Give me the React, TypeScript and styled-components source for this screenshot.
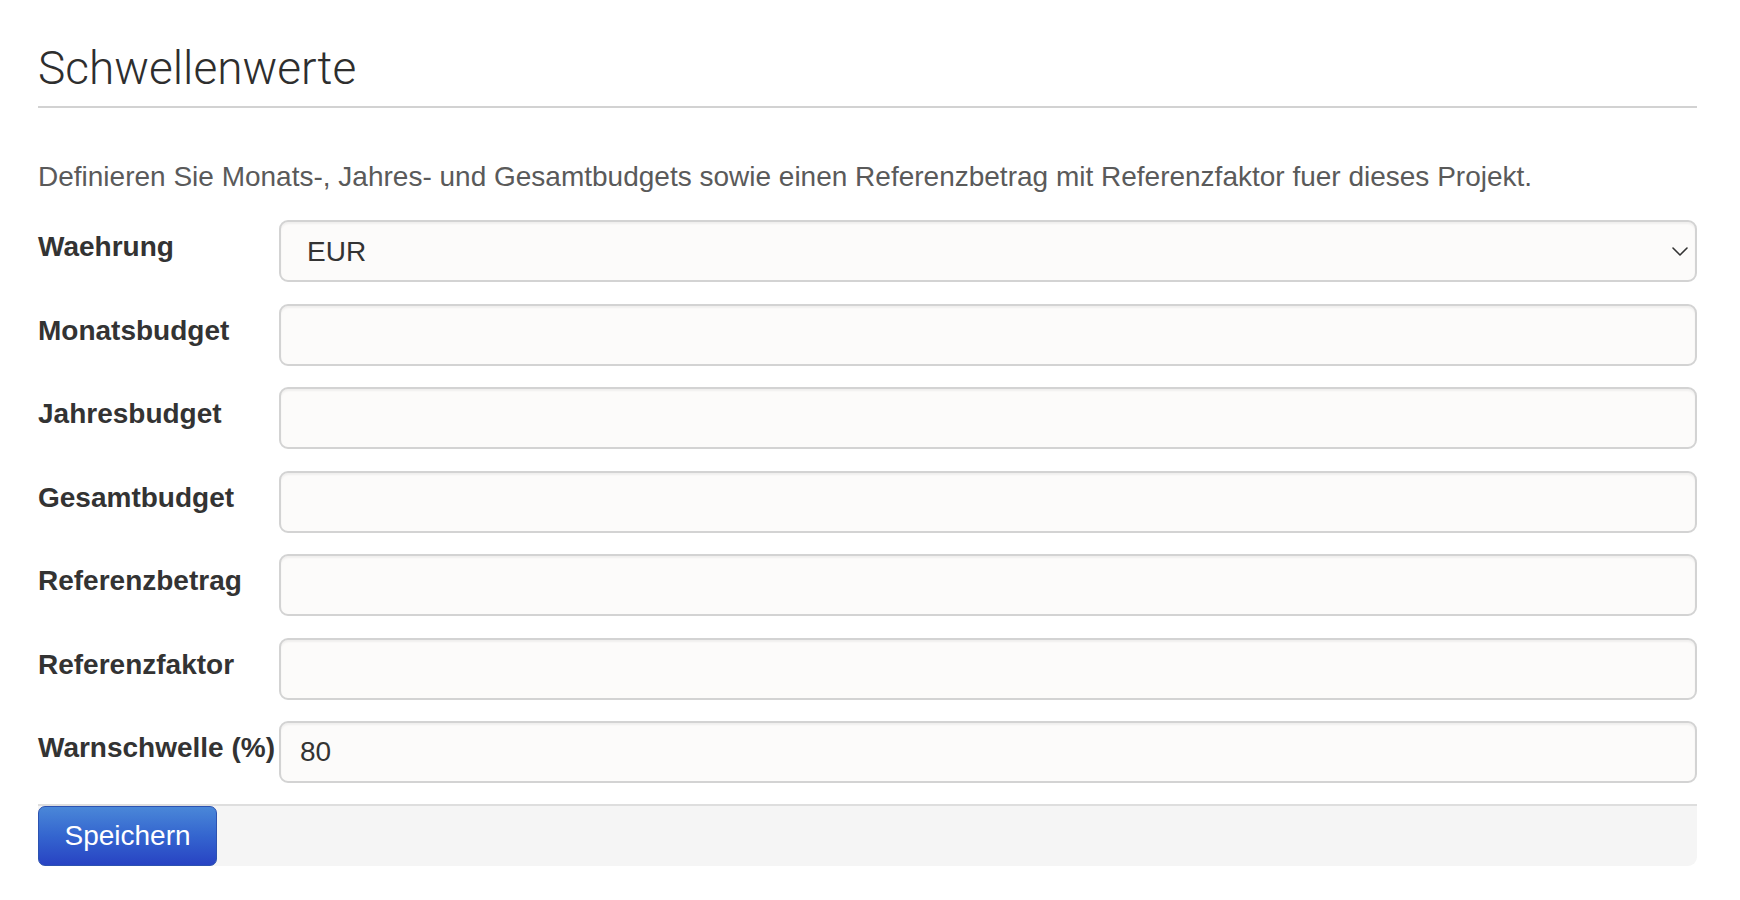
import React from "react";
import styled, { createGlobalStyle } from "styled-components";

const GlobalStyle = createGlobalStyle`
  html, body {
    margin: 0;
    padding: 0;
    background: #ffffff;
  }
  body {
    font-family: "Liberation Sans", Arial, Helvetica, sans-serif;
    color: #333333;
  }
  * { box-sizing: border-box; }
`;

const Page = styled.div`
  padding: 40px 0 0 38px;
  width: 1697px;
`;

const Title = styled.h2`
  margin: 0;
  padding-bottom: 10px;
  font-family: Roboto, "Liberation Sans", Arial, sans-serif;
  font-weight: 300;
  font-size: 46px;
  line-height: 56px;
  color: #2e2e2e;
  border-bottom: 2px solid #d2d2d2;
`;

const Intro = styled.p`
  margin: 49px 0 23px 0;
  font-size: 28px;
  line-height: 40px;
  color: #5a5a5a;
`;

const Form = styled.form`
  display: flex;
  flex-direction: column;
  gap: 21.5px;
`;

const Row = styled.div`
  display: flex;
  align-items: flex-start;
`;

const Label = styled.label`
  flex: 0 0 241px;
  padding-top: 7px;
  font-size: 28px;
  line-height: 40px;
  font-weight: 700;
  color: #333333;
  white-space: nowrap;
`;

const fieldBase = `
  width: 100%;
  height: 62px;
  border: 2px solid #d3d3d3;
  border-radius: 9px;
  background: #fcfbfa;
  box-shadow: inset 0 2px 2px rgba(0, 0, 0, 0.05);
  font-family: "Liberation Sans", Arial, sans-serif;
  font-size: 28px;
  color: #333333;
  outline: none;
`;

const Input = styled.input`
  ${fieldBase}
  flex: 1;
  padding: 0 20px 0 19px;
`;

const SelectWrap = styled.div`
  position: relative;
  flex: 1;
`;

const Select = styled.select`
  ${fieldBase}
  appearance: none;
  -webkit-appearance: none;
  padding: 0 40px 0 26px;
  display: block;
`;

const Chevron = styled.svg`
  position: absolute;
  right: 9px;
  top: 27px;
  width: 16px;
  height: 9px;
  pointer-events: none;
`;

const Footer = styled.div`
  margin-top: 21px;
  height: 62px;
  border-top: 2px solid #dedede;
  background: #f5f5f5;
  border-radius: 0 0 9px 9px;
  display: flex;
  align-items: flex-start;
`;

const SaveButton = styled.button`
  width: 179px;
  height: 60px;
  border: 1px solid #2c52b0;
  border-radius: 7px;
  background: linear-gradient(to bottom, #4a87d8 0%, #3465cf 50%, #2843c3 100%);
  color: #ffffff;
  font-family: "Liberation Sans", Arial, sans-serif;
  font-size: 28px;
  line-height: 40px;
  padding: 0;
  cursor: pointer;
`;

type FieldProps = { label: string; value?: string };

const fields: FieldProps[] = [
  { label: "Monatsbudget" },
  { label: "Jahresbudget" },
  { label: "Gesamtbudget" },
  { label: "Referenzbetrag" },
  { label: "Referenzfaktor" },
  { label: "Warnschwelle (%)", value: "80" },
];

export default function App() {
  return (
    <>
      <GlobalStyle />
      <Page>
        <Title>Schwellenwerte</Title>
        <Intro>
          Definieren Sie Monats-, Jahres- und Gesamtbudgets sowie einen Referenzbetrag mit
          Referenzfaktor fuer dieses Projekt.
        </Intro>
        <Form onSubmit={(e) => e.preventDefault()}>
          <Row>
            <Label>Waehrung</Label>
            <SelectWrap>
              <Select defaultValue="EUR">
                <option value="EUR">EUR</option>
                <option value="USD">USD</option>
                <option value="CHF">CHF</option>
              </Select>
              <Chevron viewBox="0 0 16 9" fill="none">
                <path d="M1 1 L8 8 L15 1" stroke="#333" strokeWidth="1.6" strokeLinecap="round" strokeLinejoin="round" />
              </Chevron>
            </SelectWrap>
          </Row>
          {fields.map((f) => (
            <Row key={f.label}>
              <Label>{f.label}</Label>
              <Input type="text" defaultValue={f.value ?? ""} />
            </Row>
          ))}
        </Form>
        <Footer>
          <SaveButton type="button">Speichern</SaveButton>
        </Footer>
      </Page>
    </>
  );
}
